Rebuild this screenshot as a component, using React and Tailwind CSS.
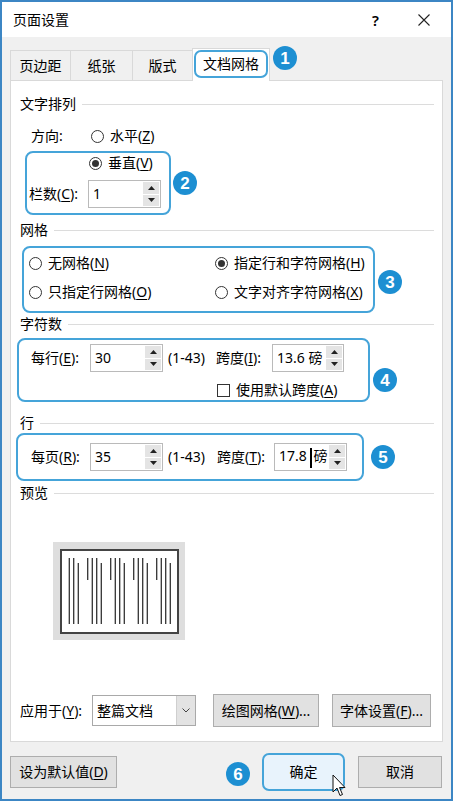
import clsx from "clsx";

function K({ children }) {
  return <span className="underline underline-offset-[2px] decoration-1">{children}</span>;
}

function Badge({ n, className }) {
  return (
    <div
      className={clsx(
        "w-[24px] h-[24px] rounded-full bg-[#1d8fd2] text-white flex items-center justify-center font-['Liberation_Sans',sans-serif] font-bold text-[17px] leading-none shrink-0",
        className
      )}
    >
      {n}
    </div>
  );
}

function Radio({ checked }) {
  return (
    <span className="w-[13px] h-[13px] rounded-full border border-[#333] bg-white flex items-center justify-center shrink-0">
      {checked && <span className="w-[7px] h-[7px] rounded-full bg-[#333]" />}
    </span>
  );
}

function Tri({ up }) {
  return (
    <svg width="7" height="4" viewBox="0 0 7 4">
      <polygon points={up ? "0,4 7,4 3.5,0" : "0,0 7,0 3.5,4"} fill="#222" />
    </svg>
  );
}

function Spin({ className, children }) {
  return (
    <div className={clsx("h-[28px] border border-[#bababa] bg-white flex shrink-0", className)}>
      <div className="flex-1 pl-[4px] flex items-center whitespace-pre">
        <span>{children}</span>
      </div>
      <div className="w-[18px] flex flex-col gap-px p-px">
        <div className="flex-1 bg-[#e4e4e4] flex items-center justify-center">
          <Tri up />
        </div>
        <div className="flex-1 bg-[#e4e4e4] flex items-center justify-center">
          <Tri />
        </div>
      </div>
    </div>
  );
}

function Section({ title, className }) {
  return (
    <div className={clsx("h-[20px] flex items-center gap-[6px] ml-[4px]", className)}>
      <span>{title}</span>
      <div className="flex-1 h-px bg-[#dcdcdc]" />
    </div>
  );
}

function Preview() {
  const groups = [0, 1, 2, 3, 4];
  return (
    <svg width="132" height="98" viewBox="0 0 132 98">
      <rect x="0" y="0" width="132" height="98" fill="#dedede" />
      <rect x="8" y="8" width="117" height="83" fill="#fff" stroke="#444" strokeWidth="2" />
      {groups.map((k) => {
        const s = 11.7 + 23 * k;
        return (
          <g key={k} stroke="#333" strokeWidth="1.3">
            {k > 0 && <line x1={s} y1="16" x2={s} y2="38" />}
            <line x1={s + 4.6} y1="16" x2={s + 4.6} y2="82" />
            <line x1={s + 9} y1="16" x2={s + 9} y2="82" />
            <line x1={s + 13.6} y1="21" x2={s + 13.6} y2="82" />
          </g>
        );
      })}
    </svg>
  );
}

export default function App() {
  return (
    <div className="w-[453px] h-[801px] border-2 border-[#3c86c4] bg-[#f0f0f0] flex flex-col text-[14px] leading-[20px] text-black font-['Noto_Sans','Noto_Sans_CJK_SC',sans-serif]">
      {/* title bar */}
      <div className="h-[35px] bg-white flex items-center pl-[11px] pr-[21px] shrink-0">
        <span>页面设置</span>
        <span className="ml-auto font-semibold text-[15px]">?</span>
        <svg className="ml-[39px]" width="12" height="12" viewBox="0 0 12 12">
          <path d="M0.5 0.5 L11.5 11.5 M11.5 0.5 L0.5 11.5" stroke="#222" strokeWidth="1.1" />
        </svg>
      </div>

      {/* tabs */}
      <div className="mt-[9px] h-[34px] flex items-end pl-[8px] shrink-0">
        <div className="w-[61px] h-[30px] border border-b-0 border-[#d9d9d9] flex items-center justify-center">页边距</div>
        <div className="-ml-px w-[63px] h-[30px] border border-b-0 border-[#d9d9d9] flex items-center justify-center">纸张</div>
        <div className="-ml-px w-[61px] h-[30px] border border-b-0 border-[#d9d9d9] flex items-center justify-center">版式</div>
        <div className="-ml-px -mb-px w-[78px] h-[33px] bg-white border border-b-0 border-[#d9d9d9] pt-px pl-px relative z-10">
          <div className="w-[74px] h-[28px] border-2 border-[#45a4d9] rounded-[7px] flex items-center justify-center">文档网格</div>
        </div>
        <Badge n="1" className="self-start ml-[3px]" />
      </div>

      {/* panel */}
      <div className="mx-[8px] h-[662px] shrink-0 border border-[#d9d9d9] bg-white flex flex-col pl-[5px] pr-[8px] pb-[14px]">
        <Section title="文字排列" className="mt-[13px]" />
        <div className="mt-[12px] h-[20px] flex items-center pl-[15px]">
          <span className="w-[60px]">方向:</span>
          <Radio />
          <span className="ml-[6px]">
            水平(<K>Z</K>)
          </span>
        </div>

        <div className="mt-[5px] ml-[9px] flex items-center">
          <div className="w-[146px] h-[64px] border-2 border-[#45a4d9] rounded-[8px] flex flex-col">
            <div className="h-[20px] flex items-center pl-[62px]">
              <Radio checked />
              <span className="ml-[6px]">
                垂直(<K>V</K>)
              </span>
            </div>
            <div className="mt-[7px] h-[28px] flex items-center pl-[2px]">
              <span className="w-[59px]">
                栏数(<K>C</K>):
              </span>
              <Spin className="w-[73px]">1</Spin>
            </div>
          </div>
          <Badge n="2" className="ml-[2px]" />
        </div>

        <Section title="网格" className="mt-[5px]" />
        <div className="mt-[6px] ml-[6px] flex">
          <div className="w-[353px] h-[67px] border-2 border-[#45a4d9] rounded-[8px] pt-[5px] pl-[5px] grid grid-cols-[186px_1fr] gap-y-[9px] content-start">
            <div className="h-[20px] flex items-center">
              <Radio />
              <span className="ml-[6px]">
                无网格(<K>N</K>)
              </span>
            </div>
            <div className="h-[20px] flex items-center">
              <Radio checked />
              <span className="ml-[6px]">
                指定行和字符网格(<K>H</K>)
              </span>
            </div>
            <div className="h-[20px] flex items-center">
              <Radio />
              <span className="ml-[6px]">
                只指定行网格(<K>O</K>)
              </span>
            </div>
            <div className="h-[20px] flex items-center">
              <Radio />
              <span className="ml-[6px]">
                文字对齐字符网格(<K>X</K>)
              </span>
            </div>
          </div>
          <Badge n="3" className="ml-[3px] mt-[24px]" />
        </div>

        <Section title="字符数" className="mt-[1px]" />
        <div className="mt-[4px] ml-[1px] flex">
          <div className="w-[353px] h-[64px] border-2 border-[#45a4d9] rounded-[8px] pt-[4px] flex flex-col">
            <div className="h-[28px] flex items-center pl-[12px]">
              <span className="w-[59px]">
                每行(<K>E</K>):
              </span>
              <Spin className="w-[73px]">30</Spin>
              <span className="w-[48px] ml-[5px]">(1-43)</span>
              <span className="w-[56px]">
                跨度(<K>I</K>):
              </span>
              <Spin className="w-[72px]">13.6 磅</Spin>
            </div>
            <div className="mt-[8px] h-[20px] flex items-center pl-[198px]">
              <span className="w-[13px] h-[13px] border border-[#333] bg-white shrink-0" />
              <span className="ml-[6px]">
                使用默认跨度(<K>A</K>)
              </span>
            </div>
          </div>
          <Badge n="4" className="self-end mb-[10px] ml-[3px]" />
        </div>

        <Section title="行" className="mt-[11px]" />
        <div className="flex items-center">
          <div className="w-[348px] h-[48px] border-2 border-[#45a4d9] rounded-[8px] flex items-center pl-[13px]">
            <span className="w-[59px]">
              每页(<K>R</K>):
            </span>
            <Spin className="w-[73px]">35</Spin>
            <span className="w-[49px] ml-[5px]">(1-43)</span>
            <span className="w-[57px]">
              跨度(<K>T</K>):
            </span>
            <Spin className="w-[73px]">
              {"17.8 "}
              <span className="inline-block align-middle w-[2px] h-[20px] bg-black mr-[1px]" />磅
            </Spin>
          </div>
          <Badge n="5" className="ml-[7px]" />
        </div>

        <Section title="预览" className="mt-[2px]" />
        <div className="mt-[39px] ml-[37px]">
          <Preview />
        </div>

        <div className="mt-auto h-[33px] flex items-center pl-[4px]">
          <span className="w-[72px]">
            应用于(<K>Y</K>):
          </span>
          <div className="w-[104px] h-[31px] border border-[#a9a9a9] bg-white flex">
            <div className="flex-1 pl-[4px] flex items-center">整篇文档</div>
            <div className="w-[19px] bg-[#e3e3e3] border-l border-[#cfcfcf] flex items-center justify-center">
              <svg width="8" height="5" viewBox="0 0 8 5">
                <path d="M0.5 0.5 L4 4 L7.5 0.5" stroke="#444" strokeWidth="1" fill="none" />
              </svg>
            </div>
          </div>
          <div className="ml-[17px] w-[106px] h-[33px] bg-[#e1e1e1] border border-[#adadad] flex items-center justify-center">
            绘图网格(<K>W</K>)...
          </div>
          <div className="ml-[13px] w-[99px] h-[33px] bg-[#e1e1e1] border border-[#adadad] flex items-center justify-center">
            字体设置(<K>F</K>)...
          </div>
        </div>
      </div>

      {/* footer */}
      <div className="flex-1 flex items-start pl-[8px]">
        <div className="mt-[14px] w-[107px] h-[32px] bg-[#e1e1e1] border border-[#adadad] flex items-center justify-center">
          设为默认值(<K>D</K>)
        </div>
        <Badge n="6" className="ml-[109px] mt-[20px]" />
        <div className="relative ml-[12px] mt-[11px] w-[83px] h-[38px] border-2 border-[#45a4d9] rounded-[7px] bg-[#e8f3fc] flex items-center justify-center">
          确定
          <svg className="absolute left-[68px] top-[19px]" width="14" height="23" viewBox="0 0 14 23">
            <path
              d="M1 1 L1 18 L5 14 L8 21.5 L10.5 20.5 L7.5 13.5 L13 13.5 Z"
              fill="#fff"
              stroke="#111"
              strokeWidth="1"
              strokeLinejoin="round"
            />
          </svg>
        </div>
        <div className="ml-[13px] mt-[14px] w-[84px] h-[32px] bg-[#e1e1e1] border border-[#adadad] flex items-center justify-center">
          取消
        </div>
      </div>
    </div>
  );
}
